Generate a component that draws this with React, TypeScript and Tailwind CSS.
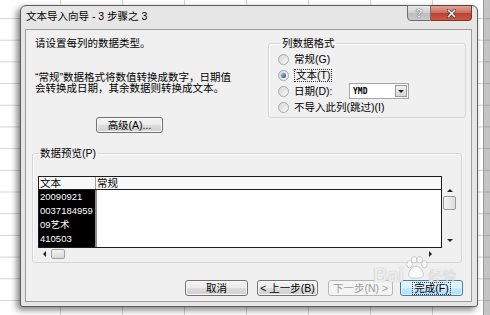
function Tri({ dir }: { dir: "up" | "down" | "left" | "right" }) {
  const cls = {
    up: "border-x-[3px] border-b-[3px] border-x-transparent border-b-[#222]",
    down: "border-x-[3px] border-t-[3px] border-x-transparent border-t-[#222]",
    left: "border-y-[3px] border-r-[3px] border-y-transparent border-r-[#222]",
    right: "border-y-[3px] border-l-[3px] border-y-transparent border-l-[#222]",
  }[dir];
  return <span className={`block size-0 ${cls}`} />;
}

function Radio({ checked }: { checked?: boolean }) {
  return (
    <span className="grid size-[11px] shrink-0 place-items-center rounded-full border border-[#a8a8a8] bg-[linear-gradient(135deg,#d4d4d4,#fbfbfb)]">
      {checked && (
        <span className="size-[5px] rounded-full bg-[radial-gradient(circle_at_35%_35%,#8fb4e0,#1b3c70)]" />
      )}
    </span>
  );
}

function Button({
  children,
  className = "",
  kind = "normal",
}: {
  children: React.ReactNode;
  className?: string;
  kind?: "normal" | "default" | "disabled";
}) {
  const look =
    kind === "default"
      ? "border-[#3c7fb1] bg-[linear-gradient(to_bottom,#eaf6fd,#d9f0fc_50%,#c6e9fc_50%,#b2dcf3)] shadow-[inset_0_0_0_1px_#e6f5ff]"
      : kind === "disabled"
        ? "border-[#b5b8ba] bg-[#f4f4f4] text-[#9a9a9a]"
        : "border-[#707070] bg-[linear-gradient(to_bottom,#f4f4f4,#ebebeb_50%,#dddddd_50%,#cfcfcf)] shadow-[inset_0_0_0_1px_#fbfbfb]";
  return (
    <div
      className={`flex h-[16px] shrink-0 items-center justify-center rounded-[3px] border ${look} ${className}`}
    >
      {children}
    </div>
  );
}

function TitleButtons() {
  return (
    <div className="ml-auto mr-[5px] -mt-px flex h-[16px]">
      <div className="flex w-[24px] items-center justify-center rounded-bl-[4px] border border-[#6e6e6e] bg-[linear-gradient(to_bottom,#e9e9e9,#cfcfcf_50%,#bdbdbd_50%,#c9c9c9)] text-[11px] font-bold text-white [text-shadow:0_0_1px_#444,0_0_1px_#444]">
        ?
      </div>
      <div className="flex w-[41px] items-center justify-center rounded-br-[4px] border border-l-0 border-[#6e3a32] bg-[linear-gradient(to_bottom,#e3a396,#cf6a5a_50%,#b8412f_50%,#c95a44)]">
        <svg viewBox="0 0 10 10" className="size-[9px]" aria-hidden>
          <path d="M1.5 1.5 8.5 8.5M8.5 1.5 1.5 8.5" stroke="#3b1510" strokeWidth="3" strokeLinecap="square" />
          <path d="M1.5 1.5 8.5 8.5M8.5 1.5 1.5 8.5" stroke="#fff" strokeWidth="1.7" strokeLinecap="square" />
        </svg>
      </div>
    </div>
  );
}

function ColumnFormat() {
  return (
    <fieldset className="mt-[8px] h-[80px] w-[198px] rounded-[3px] border border-[#d6d6d6] pl-[9px] shadow-[inset_1px_1px_0_#fff]">
      <legend className="ml-[3px] px-[1px] leading-[11px]">列数据格式</legend>
      <div className="flex flex-col pt-[2px]">
        <div className="flex h-[16px] items-center gap-[5px]">
          <Radio />
          <span>常规(G)</span>
        </div>
        <div className="flex h-[16px] items-center gap-[5px]">
          <Radio checked />
          <span className="border border-dotted border-[#333] px-px leading-[11px]">文本(T)</span>
        </div>
        <div className="flex h-[16px] items-center gap-[5px]">
          <Radio />
          <span className="w-[50px]">日期(D):</span>
          <div className="flex h-[16px] w-[60px] items-center border border-[#a7a7a7] bg-white">
            <span className="flex-1 pl-[3px] font-['DejaVu_Sans_Mono',monospace] text-[8px] font-bold">YMD</span>
            <span className="m-px flex h-[12px] w-[12px] items-center justify-center border border-[#9b9b9b] bg-[linear-gradient(to_bottom,#f2f2f2,#d6d6d6)]">
              <Tri dir="down" />
            </span>
          </div>
        </div>
        <div className="flex h-[16px] items-center gap-[5px]">
          <Radio />
          <span>不导入此列(跳过)(I)</span>
        </div>
      </div>
    </fieldset>
  );
}

const rows = ["20090921", "0037184959", "09艺术", "410503"];

function Preview() {
  return (
    <fieldset className="ml-[6px] h-[115px] w-[430px] rounded-[3px] border border-[#d6d6d6] pl-[5px] shadow-[inset_1px_1px_0_#fff]">
      <legend className="ml-px px-px leading-[11px]">数据预览(P)</legend>
      <div className="mt-[17px] flex">
        <div className="flex h-[72px] w-[404px] flex-col border border-[#1c1c1c] bg-white">
          <div className="flex h-[13px] shrink-0 border-b border-[#1c1c1c] bg-[#f8f8f8] leading-[13px]">
            <span className="w-[57px] border-r border-[#a0a0a0] pl-px">文本</span>
            <span className="pl-px">常规</span>
          </div>
          <div className="flex flex-1">
            <div className="flex w-[56px] flex-col overflow-hidden bg-black text-[9.5px] text-white">
              {rows.map((r) => (
                <span key={r} className="h-[14px] whitespace-nowrap pl-px leading-[14px]">
                  {r}
                </span>
              ))}
            </div>
            <div className="w-[2px] bg-[#8c8c8c]" />
            <div className="flex-1" />
          </div>
        </div>
        <div className="flex w-[15px] flex-col items-center pt-[13px]">
          <Tri dir="up" />
          <div className="mt-[4px] h-[14px] w-[13px] rounded-[2px] border border-[#9a9a9a] bg-[linear-gradient(to_right,#f3f3f3,#dcdcdc)]" />
          <div className="mt-auto mb-[6px]">
            <Tri dir="down" />
          </div>
        </div>
      </div>
      <div className="flex h-[11px] items-center">
        <span className="ml-[5px]">
          <Tri dir="left" />
        </span>
        <div className="ml-[5px] h-[10px] w-[14px] rounded-[2px] border border-[#a0a0a0] bg-[linear-gradient(to_bottom,#f3f3f3,#d8d8d8)]" />
        <span className="ml-[364px]">
          <Tri dir="right" />
        </span>
      </div>
    </fieldset>
  );
}

function Watermark() {
  return (
    <div className="pointer-events-none absolute left-[352px] top-[250px] flex items-end text-white/80 [text-shadow:0_0_1px_#9a9a9a]">
      <span className="font-['Liberation_Sans',sans-serif] text-[20px] font-bold leading-[22px]">Bai</span>
      <svg viewBox="0 0 26 26" className="mb-[6px] size-[24px]" aria-hidden>
        <g fill="#fff" fillOpacity="0.75" stroke="#a8a8a8" strokeWidth="0.6">
          <ellipse cx="6" cy="9" rx="3" ry="4" />
          <ellipse cx="11" cy="4" rx="3" ry="3.5" />
          <ellipse cx="17" cy="4" rx="3" ry="3.5" />
          <ellipse cx="22" cy="9" rx="3" ry="4" />
          <path d="M13 11c4 0 8 6 8 9s-3 4-8 4-8-1-8-4 4-9 8-9Z" />
        </g>
      </svg>
      <span className="mb-[2px] text-[14px] leading-[16px]">经验</span>
    </div>
  );
}

function Dialog() {
  return (
    <div className="relative flex h-[302px] w-[458px] flex-col rounded-t-[6px] rounded-b-[3px] border border-[#5c5c5c] bg-[#e6e6e6] shadow-[-3px_3px_6px_rgba(0,0,0,0.5)]">
      <div className="flex h-[23px] shrink-0">
        <span className="pl-[5px] pt-[5px] leading-[11px]">文本导入向导 - 3 步骤之 3</span>
        <TitleButtons />
      </div>
      <div className="ml-[4px] flex h-[273px] w-[447px] flex-col border border-[#9d9d9d] bg-[#f0f0f0]">
        <div className="flex h-[118px] shrink-0">
          <div className="flex w-[242px] flex-col pl-[9px] pt-[8px]">
            <p className="leading-[11px]">请设置每列的数据类型。</p>
            <p className="mt-[23px] leading-[10.5px]">
              “常规”数据格式将数值转换成数字，日期值
              <br />
              会转换成日期，其余数据则转换成文本。
            </p>
            <Button className="ml-[61px] mt-[24px] w-[67px]">高级(A)...</Button>
          </div>
          <ColumnFormat />
        </div>
        <Preview />
        <div className="mt-[17px] flex pl-[159px]">
          <Button className="w-[63px]">取消</Button>
          <Button className="ml-[9px] w-[61px]">&lt; 上一步(B)</Button>
          <Button kind="disabled" className="ml-[10px] w-[65px]">下一步(N) &gt;</Button>
          <Button kind="default" className="ml-[7px] w-[63px]">
            <span className="border border-dotted border-[#333] px-px leading-[11px]">完成(F)</span>
          </Button>
        </div>
      </div>
      <Watermark />
    </div>
  );
}

export default function App() {
  return (
    <div className="flex h-[315px] w-[490px] overflow-hidden bg-white font-['Liberation_Sans','Noto_Sans_CJK_SC',sans-serif] text-[10.5px] leading-[11px] text-black">
      <div className="h-full w-[483px] bg-[linear-gradient(to_bottom,transparent_20.7px,#d4d4d4_20.7px),linear-gradient(to_right,transparent_61px,#d4d4d4_61px)] bg-size-[100%_21.7px,62px_100%] bg-position-[0_-2.7px,-1px_0] pl-[20px] pt-[5px]">
        <Dialog />
      </div>
      <div className="h-full flex-1 border-l border-[#9a9a9a] bg-[#c4c4c4] bg-[linear-gradient(to_bottom,transparent_20.7px,#a4a4a4_20.7px)] bg-size-[100%_21.7px] bg-position-[0_-2.7px]" />
    </div>
  );
}
